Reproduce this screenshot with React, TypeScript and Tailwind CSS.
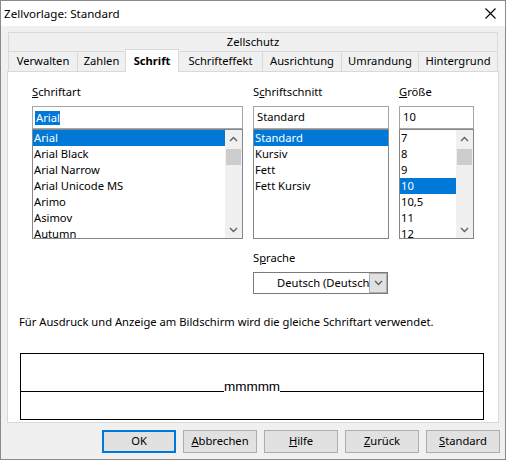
import React from "react";

const ui = "font-['Noto_Sans','Liberation_Sans',sans-serif] text-[11.2px] text-black";

function ChevronUp() {
  return (
    <svg width="9" height="6" viewBox="0 0 9 6">
      <path d="M1 5 L4.5 1.5 L8 5" fill="none" stroke="#606060" strokeWidth="1.4" />
    </svg>
  );
}

function ChevronDown() {
  return (
    <svg width="9" height="6" viewBox="0 0 9 6">
      <path d="M1 1 L4.5 4.5 L8 1" fill="none" stroke="#606060" strokeWidth="1.4" />
    </svg>
  );
}

function Scrollbar() {
  return (
    <div className="w-[17px] h-full bg-[#f0f0f0] flex flex-col shrink-0">
      <div className="h-[17px] flex items-center justify-center">
        <ChevronUp />
      </div>
      <div className="mt-[2px] mx-[1px] h-[16px] bg-[#cdcdcd]" />
      <div className="flex-1" />
      <div className="h-[17px] flex items-center justify-center">
        <ChevronDown />
      </div>
    </div>
  );
}

function ListBox({
  items,
  selected,
  scroll,
  className,
}: {
  items: string[];
  selected: string;
  scroll?: boolean;
  className: string;
}) {
  return (
    <div className={"h-[110px] border border-[#828790] bg-white flex overflow-hidden " + className}>
      <div className="flex-1 flex flex-col overflow-hidden">
        {items.map((it) => (
          <div
            key={it}
            className={
              "h-[16px] leading-[16px] pl-[1px] whitespace-nowrap shrink-0 " +
              (it === selected ? "bg-[#0078d7] text-white" : "")
            }
          >
            {it}
          </div>
        ))}
      </div>
      {scroll && <Scrollbar />}
    </div>
  );
}

function Field({ children, className }: { children: React.ReactNode; className: string }) {
  return (
    <div className={"h-[23px] border border-[#a5a5a5] bg-white flex items-center pl-[2px] " + className}>
      {children}
    </div>
  );
}

function Btn({ children, primary }: { children: React.ReactNode; primary?: boolean }) {
  return (
    <div
      className={
        "w-[74px] h-[23px] bg-[#e1e1e1] flex items-center justify-center " +
        (primary ? "border-2 border-[#0078d7]" : "border border-[#adadad]")
      }
    >
      {children}
    </div>
  );
}

const tabs = [
  { label: "Verwalten", cls: "w-[69px] border-l" },
  { label: "Zahlen", cls: "w-[48px] border-l" },
  { label: "Schrift", cls: "w-[54px] border-l border-r h-[23px] -mb-[1px] bg-white font-bold", sel: true },
  { label: "Schrifteffekt", cls: "w-[83px]" },
  { label: "Ausrichtung", cls: "w-[79px] border-l" },
  { label: "Umrandung", cls: "w-[77px] border-l" },
  { label: "Hintergrund", cls: "w-[80px] border-l border-r" },
];

export default function App() {
  return (
    <div className={"w-[506px] h-[460px] border border-[#8a8a8a] flex flex-col bg-[#f0f0f0] " + ui}>
      {/* title bar */}
      <div className="h-[25px] bg-white flex items-center justify-between pl-[3px] pr-[9px] shrink-0 text-[11.6px]">
        <span>Zellvorlage: Standard</span>
        <svg width="11" height="11" viewBox="0 0 11 11">
          <path d="M0.5 0.5 L10.5 10.5 M10.5 0.5 L0.5 10.5" stroke="#000" strokeWidth="1.1" />
        </svg>
      </div>

      <div className="flex-1 flex flex-col px-[6px] pt-[6px]">
        {/* tab header */}
        <div className="mx-[1px] flex flex-col relative z-10">
          <div className="h-[19px] border-t border-l border-r border-[#d9d9d9] flex items-center justify-center">
            Zellschutz
          </div>
          <div className="h-[20px] flex items-end">
            {tabs.map((t) => (
              <div
                key={t.label}
                className={
                  "border-t border-[#d9d9d9] flex items-center justify-center " +
                  (t.sel ? "" : "h-[20px] ") +
                  t.cls
                }
              >
                {t.label}
              </div>
            ))}
          </div>
        </div>

        {/* panel */}
        <div className="h-[352px] bg-white border border-[#d9d9d9] flex flex-col pt-[12px]">
          <div className="flex gap-[10px] pl-[24px]">
            <div className="flex flex-col w-[211px]">
              <div className="h-[16px] leading-[16px] mb-[6px]">
                <span className="underline">S</span>chriftart
              </div>
              <Field className="w-[211px]">
                <span className="bg-[#0078d7] text-white leading-[14px] pl-[1px]">Arial</span>
              </Field>
              <ListBox
                className="w-[211px]"
                scroll
                selected="Arial"
                items={["Arial", "Arial Black", "Arial Narrow", "Arial Unicode MS", "Arimo", "Asimov", "Autumn"]}
              />
            </div>
            <div className="flex flex-col w-[136px]">
              <div className="h-[16px] leading-[16px] mb-[6px]">
                S<span className="underline">c</span>hriftschnitt
              </div>
              <Field className="w-[136px]">
                <span className="pl-[1px]">Standard</span>
              </Field>
              <ListBox
                className="w-[136px]"
                selected="Standard"
                items={["Standard", "Kursiv", "Fett", "Fett Kursiv"]}
              />
              <div className="h-[16px] leading-[16px] mt-[11px] mb-[6px]">
                S<span className="underline">p</span>rache
              </div>
              <div className="w-[135px] h-[22px] border border-[#7a7a7a] bg-white flex overflow-hidden">
                <div className="flex-1 pl-[23px] whitespace-nowrap overflow-hidden leading-[20px]">
                  Deutsch (Deutschland)
                </div>
                <div className="w-[18px] h-full border border-[#adadad] bg-[#e1e1e1] flex items-center justify-center shrink-0">
                  <ChevronDown />
                </div>
              </div>
            </div>
            <div className="flex flex-col w-[75px]">
              <div className="h-[16px] leading-[16px] mb-[6px]">
                <span className="underline">G</span>röße
              </div>
              <Field className="w-[75px]">
                <span className="pl-[1px]">10</span>
              </Field>
              <ListBox
                className="w-[75px]"
                scroll
                selected="10"
                items={["7", "8", "9", "10", "10,5", "11", "12"]}
              />
            </div>
          </div>

          <div className="pl-[11px] mt-[20px] h-[16px] leading-[16px] whitespace-nowrap">
            Für Ausdruck und Anzeige am Bildschirm wird die gleiche Schriftart verwendet.
          </div>

          <div className="ml-[12px] mt-[23px] w-[464px] h-[67px] border border-black flex flex-col">
            <div className="h-[38px] flex items-end">
              <div className="flex-1 border-b border-black" />
              <span className="font-['Liberation_Sans',sans-serif] text-[13.5px] leading-none -mb-[1px]">
                mmmmm
              </span>
              <div className="flex-1 border-b border-black" />
            </div>
          </div>
        </div>

        {/* buttons */}
        <div className="flex justify-end gap-[7px] mt-[7px] -mr-[1px]">
          <Btn primary>OK</Btn>
          <Btn>
            <span>
              <span className="underline">A</span>bbrechen
            </span>
          </Btn>
          <Btn>
            <span>
              <span className="underline">H</span>ilfe
            </span>
          </Btn>
          <Btn>
            <span>
              <span className="underline">Z</span>urück
            </span>
          </Btn>
          <Btn>
            <span>
              <span className="underline">S</span>tandard
            </span>
          </Btn>
        </div>
      </div>
    </div>
  );
}
